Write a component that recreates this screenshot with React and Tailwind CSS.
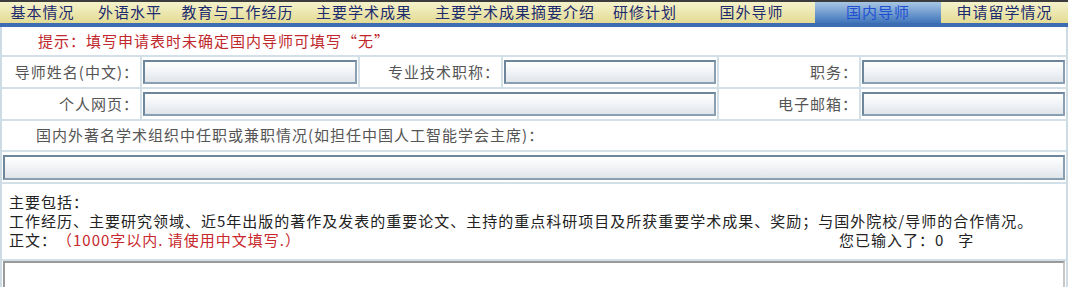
import React from 'react'

const font = { fontFamily: '"Noto Sans CJK SC", "Liberation Sans", sans-serif' }

const tabs = [
  { name: '基本情况', w: 'w-[85px]' },
  { name: '外语水平', w: 'w-[90px]' },
  { name: '教育与工作经历', w: 'w-[125px]' },
  { name: '主要学术成果', w: 'w-[128px]' },
  { name: '主要学术成果摘要介绍', w: 'w-[174px]' },
  { name: '研修计划', w: 'w-[86px]' },
  { name: '国外导师', w: 'w-[127px]' },
  { name: '国内导师', w: 'w-[126px]', active: true },
  { name: '申请留学情况', w: 'w-[127px]' },
]

function Field({ className = '' }) {
  return (
    <div
      className={`h-[24px] border-2 border-t-[#6d869b] border-l-[#6d869b] border-b-[#8aa0b2] border-r-[#8aa0b2] bg-gradient-to-b from-white via-[#f1f3f6] to-[#dfe5ea] ${className}`}
    />
  )
}

function Label({ children }) {
  return (
    <div className="bg-white flex items-center justify-end pr-[1px] text-[#555] text-[15px] tracking-[1px]">
      {children}
    </div>
  )
}

function Cell({ children, className = '' }) {
  return <div className={`bg-white flex items-center px-[1px] ${className}`}>{children}</div>
}

export default function App() {
  return (
    <div className="w-[1080px] h-[287px] overflow-hidden bg-white" style={font}>
      <div className="w-[1068px]">
        {/* tabs */}
        <div className="border-t-2 border-[#3c3c3c] flex bg-gradient-to-b from-[#f5f2cc] to-[#e3db93] h-[23px]">
          {tabs.map((t) => (
            <div
              key={t.name}
              className={`${t.w} flex items-center justify-center text-[15px] tracking-[1px] ${
                t.active
                  ? 'bg-gradient-to-b from-[#a9c7e3] to-[#3f74ba] text-[#1f4fd3]'
                  : 'text-[#1c2a6e]'
              }`}
            >
              {t.name}
            </div>
          ))}
        </div>
        <div className="h-[4px] bg-[#3c6db3]" />

        {/* panel */}
        <div className="border-x-2 border-[#cddbe5] bg-[#d3e0e8]">
          <div className="bg-white h-[30px] flex items-center pl-[36px] text-[#c0282c] text-[15px] tracking-[1px] border-b-2 border-[#d3e0e8]">
            提示：填写申请表时未确定国内导师可填写“无”
          </div>

          <div className="grid grid-cols-[138px_216px_141px_214px_140px_1fr] gap-[2px]">
            <Label>导师姓名(中文)：</Label>
            <Cell className="h-[30px]">
              <Field className="w-full" />
            </Cell>
            <Label>专业技术职称：</Label>
            <Cell>
              <Field className="w-full" />
            </Cell>
            <Label>职务：</Label>
            <Cell>
              <Field className="w-full" />
            </Cell>

            <Label>个人网页：</Label>
            <Cell className="col-span-3 h-[30px]">
              <Field className="w-full" />
            </Cell>
            <Label>电子邮箱：</Label>
            <Cell>
              <Field className="w-full" />
            </Cell>
          </div>

          <div className="mt-[2px] bg-white h-[29px] flex items-center pl-[34px] text-[#555] text-[15px] tracking-[1px]">
            国内外著名学术组织中任职或兼职情况(如担任中国人工智能学会主席)：
          </div>

          <div className="mt-[2px] bg-white h-[30px] flex items-center px-[1px]">
            <Field className="w-full h-[25px]" />
          </div>

          <div className="mt-[2px] bg-white h-[75px] pl-[7px] pt-[8px] text-[#222] text-[15px] tracking-[1px] leading-[19px]">
            <div>主要包括：</div>
            <div>工作经历、主要研究领域、近5年出版的著作及发表的重要论文、主持的重点科研项目及所获重要学术成果、奖励；与国外院校/导师的合作情况。</div>
            <div className="flex">
              <span>正文：</span>
              <span className="text-[#c8282c]">（1000字以内. 请使用中文填写.）</span>
              <span className="ml-[538px]">您已输入了：0</span>
              <span className="ml-[14px]">字</span>
            </div>
          </div>

          <div className="mt-[2px] bg-white h-[40px] px-[1px]">
            <div className="h-full border-2 border-[#9a9a9a] border-r-[#c8c8c8] bg-white" />
          </div>
        </div>
      </div>
    </div>
  )
}
